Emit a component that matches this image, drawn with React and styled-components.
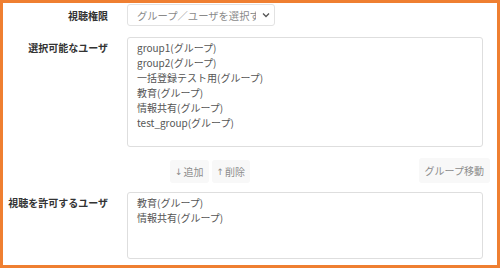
import React from "react";
import styled, { createGlobalStyle } from "styled-components";

const Global = createGlobalStyle`
  html, body { margin: 0; padding: 0; background: #fff; }
  body { font-family: "Noto Sans CJK JP", "Noto Sans", sans-serif; }
  * { box-sizing: border-box; }
`;

const Frame = styled.div`
  width: 500px;
  height: 268px;
  border: 3px solid #ef7f31;
  background: #fff;
  padding: 1px 7px 0 0;
  display: flex;
  flex-direction: column;
  overflow: hidden;
`;

const Row = styled.div`
  display: grid;
  grid-template-columns: 105px 1fr;
  column-gap: 19px;
  margin-top: ${(p) => p.$top || 0}px;
  align-items: ${(p) => (p.$center ? "center" : "start")};
`;

const Label = styled.div`
  text-align: right;
  font-size: 10px;
  line-height: 15px;
  font-weight: 700;
  color: #333;
  padding-top: ${(p) => (p.$center ? 0 : 3)}px;
  white-space: nowrap;
`;

const Select = styled.div`
  width: 148px;
  height: 22px;
  border: 1px solid #e2e2e2;
  border-radius: 3px;
  display: flex;
  align-items: center;
  padding: 0 4px 0 9px;
  gap: 6px;
`;

const SelectText = styled.span`
  flex: 1;
  overflow: hidden;
  white-space: nowrap;
  font-size: 10.3px;
  color: #8a8a8a;
`;

const ListBox = styled.div`
  height: ${(p) => p.$h}px;
  margin-right: 7px;
  border: 1px solid #dedede;
  border-radius: 3px;
  padding: 2px 9px;
  overflow-y: scroll;
  overflow-x: ${(p) => (p.$hscroll ? "scroll" : "hidden")};
  font-size: 10px;
  line-height: 15px;
  color: #555;

  &::-webkit-scrollbar {
    width: 7px;
    height: 7px;
    background: #f1f1f1;
  }
  &::-webkit-scrollbar-track {
    background: #f1f1f1;
  }
  &::-webkit-scrollbar-button:single-button {
    display: block;
    width: 7px;
    height: 7px;
    background: #f1f1f1 radial-gradient(circle, #aaa 0 1px, transparent 1.5px);
  }
  &::-webkit-scrollbar-corner {
    background: #eaeaea;
  }
`;

const Item = styled.div`
  white-space: nowrap;
`;

const ButtonRow = styled.div`
  display: flex;
  align-items: flex-end;
  gap: 3px;
  padding-left: 43px;
`;

const Btn = styled.div`
  height: ${(p) => p.$h || 23}px;
  padding: 0 ${(p) => p.$px || 5}px;
  background: #f8f8f8;
  border-radius: 3px;
  color: #8c8c8c;
  font-size: 10px;
  display: flex;
  align-items: center;
  white-space: nowrap;
  margin-left: ${(p) => (p.$right ? "auto" : 0)};
`;

const Arrow = styled.span`
  font-family: "DejaVu Sans", sans-serif;
  font-size: 9px;
  color: #8c8c8c;
  margin-right: 1px;
`;

const Chevron = () => (
  <svg width="8" height="6" viewBox="0 0 8 6">
    <path d="M1 1.5 L4 4.5 L7 1.5" fill="none" stroke="#555" strokeWidth="1.3" />
  </svg>
);

const available = [
  "group1(グループ)",
  "group2(グループ)",
  "一括登録テスト用(グループ)",
  "教育(グループ)",
  "情報共有(グループ)",
  "test_group(グループ)",
];

const allowed = ["教育(グループ)", "情報共有(グループ)"];

export default function App() {
  return (
    <>
      <Global />
      <Frame>
        <Row $center>
          <Label $center>視聴権限</Label>
          <Select>
            <SelectText>グループ／ユーザを選択する</SelectText>
            <Chevron />
          </Select>
        </Row>
        <Row $top={11}>
          <Label>選択可能なユーザ</Label>
          <ListBox $h={110} $hscroll>
            {available.map((t) => (
              <Item key={t}>{t}</Item>
            ))}
          </ListBox>
        </Row>
        <Row $top={11}>
          <div />
          <ButtonRow>
            <Btn><Arrow>↓</Arrow>追加</Btn>
            <Btn><Arrow>↑</Arrow>削除</Btn>
            <Btn $right $h={25} $px={6}>グループ移動</Btn>
          </ButtonRow>
        </Row>
        <Row $top={9}>
          <Label>視聴を許可するユーザ</Label>
          <ListBox $h={67}>
            {allowed.map((t) => (
              <Item key={t}>{t}</Item>
            ))}
          </ListBox>
        </Row>
      </Frame>
    </>
  );
}
